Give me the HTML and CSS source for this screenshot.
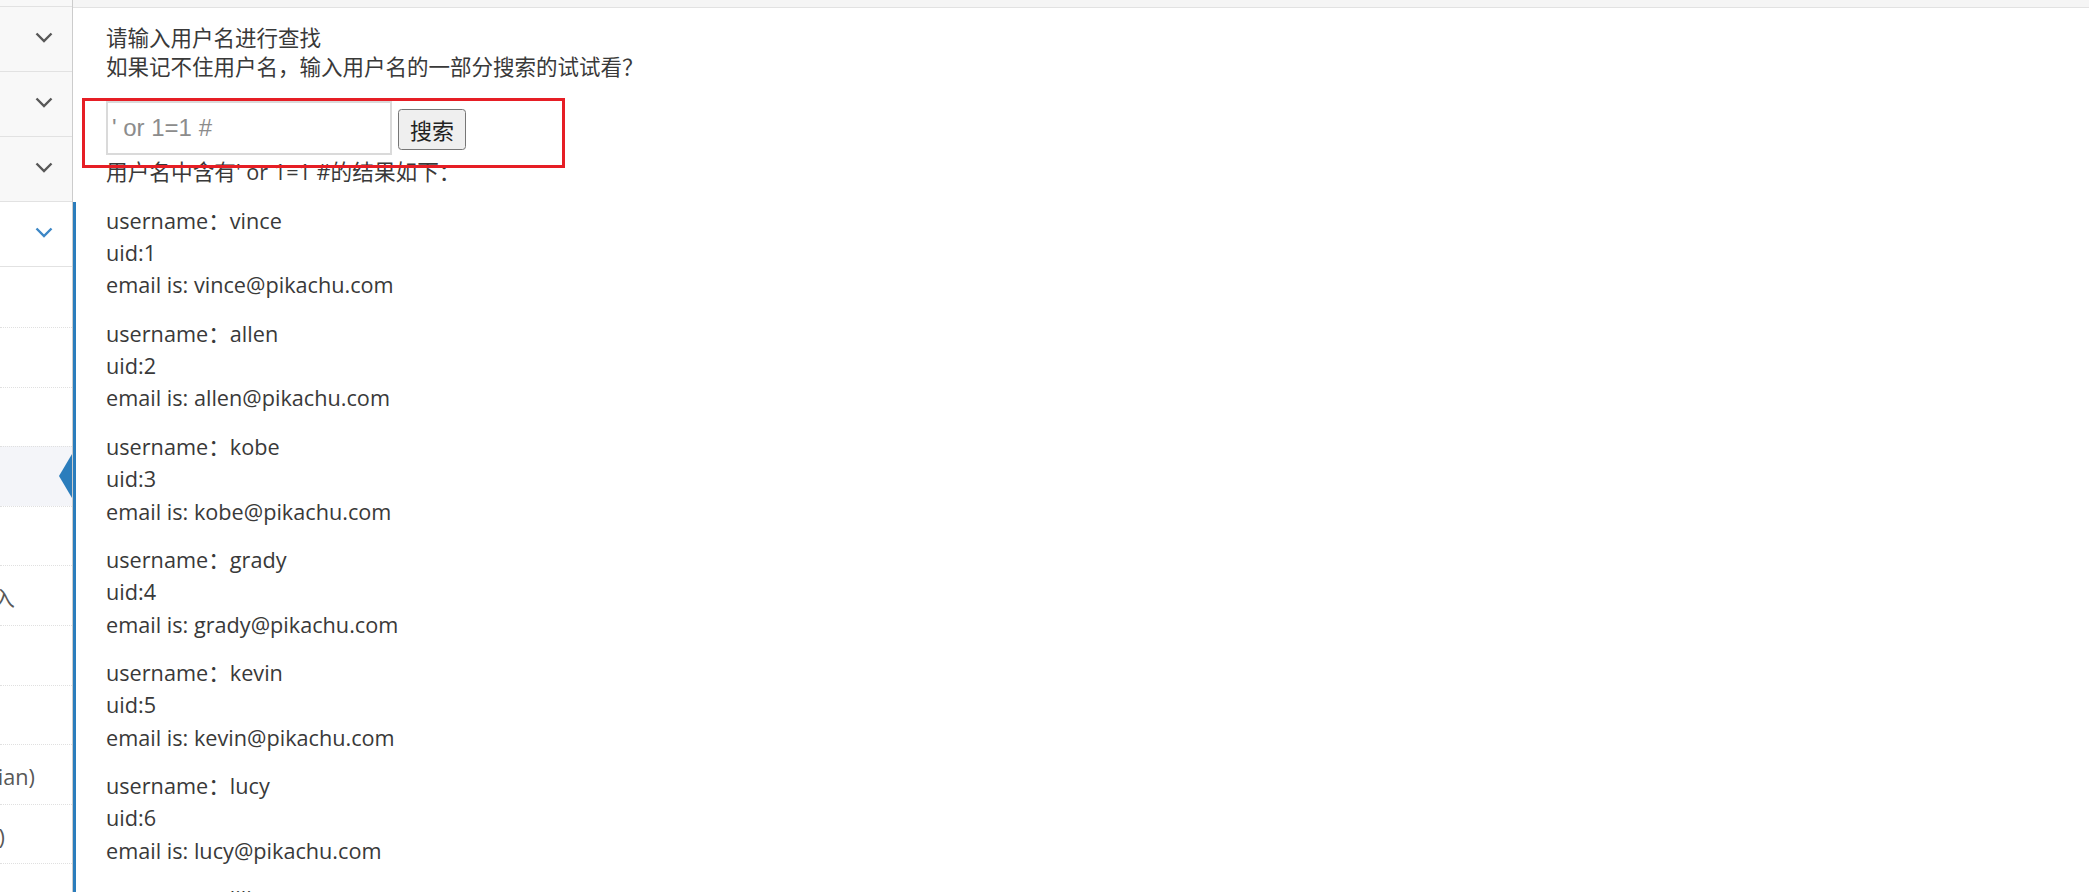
FILE: index.html
```html
<!DOCTYPE html>
<html lang="zh-CN">
<head>
<meta charset="utf-8">
<title>搜索型注入</title>
<link rel="stylesheet" href="styles.css">
</head>
<body>
<div class="layout">
  <aside class="sidebar">
    <ul class="nav-list">
      <li class="nav-item nav-item-cut"></li>
      <li class="nav-item">
        <span class="nav-text">Burte Force</span>
        <svg class="chev" width="18" height="11" viewBox="0 0 18 11"><polyline points="1.5,1.5 9,9 16.5,1.5" fill="none" stroke="currentColor" stroke-width="2.4"/></svg>
      </li>
      <li class="nav-item">
        <span class="nav-text">Cross-Site Scripting</span>
        <svg class="chev" width="18" height="11" viewBox="0 0 18 11"><polyline points="1.5,1.5 9,9 16.5,1.5" fill="none" stroke="currentColor" stroke-width="2.4"/></svg>
      </li>
      <li class="nav-item">
        <span class="nav-text">CSRF</span>
        <svg class="chev" width="18" height="11" viewBox="0 0 18 11"><polyline points="1.5,1.5 9,9 16.5,1.5" fill="none" stroke="currentColor" stroke-width="2.4"/></svg>
      </li>
      <li class="nav-open">
        <div class="nav-item nav-item-open">
          <span class="nav-text">SQL-Inject</span>
          <svg class="chev" width="18" height="11" viewBox="0 0 18 11"><polyline points="1.5,1.5 9,9 16.5,1.5" fill="none" stroke="currentColor" stroke-width="2.4"/></svg>
        </div>
        <ul class="submenu">
          <li class="sub-item sub-first"></li>
          <li class="sub-item"></li>
          <li class="sub-item"></li>
          <li class="sub-item sub-active"></li>
          <li class="sub-item"></li>
          <li class="sub-item sub-end-15"><span class="sub-text">insert/update注入</span></li>
          <li class="sub-item"></li>
          <li class="sub-item"></li>
          <li class="sub-item sub-end-35"><span class="sub-text">盲注(base on boolian)</span></li>
          <li class="sub-item sub-end-5"><span class="sub-text">盲注(base on time)</span></li>
          <li class="sub-item"></li>
        </ul>
      </li>
    </ul>
  </aside>
  <main class="main">
    <div class="breadcrumbs"></div>
    <div class="page-content">
      <p class="para para-intro">请输入用户名进行查找<br>如果记不住用户名，输入用户名的一部分搜索的试试看？</p>
      <form class="search-form">
        <input class="search-input" type="text" placeholder="' or 1=1 #">
        <button class="search-btn" type="button">搜索</button>
      </form>
      <p class="para para-title">用户名中含有' or 1=1 #的结果如下：</p>
      <p class="para">username：vince<br>uid:1<br>email is: vince@pikachu.com</p>
      <p class="para">username：allen<br>uid:2<br>email is: allen@pikachu.com</p>
      <p class="para">username：kobe<br>uid:3<br>email is: kobe@pikachu.com</p>
      <p class="para">username：grady<br>uid:4<br>email is: grady@pikachu.com</p>
      <p class="para">username：kevin<br>uid:5<br>email is: kevin@pikachu.com</p>
      <p class="para">username：lucy<br>uid:6<br>email is: lucy@pikachu.com</p>
      <p class="para">username：lili<br>uid:7<br>email is: lili@pikachu.com</p>
      <div class="highlight-box"></div>
    </div>
  </main>
</div>
</body>
</html>
```

FILE: styles.css
```css
* {
  box-sizing: border-box;
}

html, body {
  margin: 0;
  padding: 0;
  background: #ffffff;
}

body {
  width: 2089px;
  height: 892px;
  overflow: hidden;
  font-family: "Open Sans", "Noto Sans CJK SC", sans-serif;
  font-size: 21.67px;
  color: #393939;
}

.layout {
  display: flex;
  height: 892px;
  overflow: hidden;
}

/* Sidebar */
.sidebar {
  width: 73px;
  flex: 0 0 73px;
  background: #f2f2f2;
  border-right: 1px solid #cccccc;
  position: relative;
  z-index: 2;
}

.nav-list,
.submenu {
  list-style: none;
  margin: 0;
  padding: 0;
}

.nav-item {
  height: 65px;
  border-top: 1px solid #e2e2e2;
  background: #f8f8f8;
  display: flex;
  align-items: center;
  justify-content: flex-end;
  padding-right: 19px;
  padding-bottom: 4px;
  overflow: hidden;
  color: #5a5a5a;
  white-space: nowrap;
}

.nav-item-cut {
  height: 6px;
  border-top: none;
  padding: 0;
}

.nav-text {
  display: none;
}

.chev {
  display: block;
  flex: 0 0 auto;
  color: #585858;
}

.nav-open {
  position: relative;
}

.nav-open::after {
  content: "";
  position: absolute;
  top: 1px;
  bottom: 0;
  right: -4px;
  width: 3px;
  background: #2b7dbc;
}

.nav-item-open {
  background: #ffffff;
}

.nav-item-open .chev {
  color: #3d87c6;
}

.submenu {
  border-top: 1px solid #e2e2e2;
  background: #ffffff;
}

.sub-item {
  height: 59.6px;
  border-top: 1px dotted #e0e0e0;
  display: flex;
  align-items: center;
  justify-content: flex-end;
  overflow: hidden;
  white-space: nowrap;
  color: #585858;
  position: relative;
}

.sub-first {
  border-top: none;
  height: 60px;
}

.sub-end-15 {
  padding-right: 57px;
}

.sub-end-35 {
  padding-right: 37px;
}

.sub-end-5 {
  padding-right: 67px;
}

.sub-text {
  flex: 0 0 auto;
  padding-top: 2px;
}

.sub-active {
  background: #f4f5f9;
  overflow: visible;
}

.sub-active::after {
  content: "";
  position: absolute;
  right: 0;
  top: 50%;
  margin-top: -22.5px;
  border-style: solid;
  border-color: transparent #2b7dbc transparent transparent;
  border-width: 22.5px 13px 22.5px 0;
}

/* Main */
.main {
  flex: 1 1 auto;
  display: flex;
  flex-direction: column;
}

.breadcrumbs {
  height: 8px;
  flex: 0 0 8px;
  background: #f5f5f5;
  border-bottom: 1px solid #e2e2e2;
}

.page-content {
  position: relative;
  padding: 14.5px 20px 0 33px;
}

.para {
  margin: 0 0 16.2px;
  line-height: 32.3px;
}

.para-intro {
  font-size: 21.5px;
  line-height: 29.6px;
  margin-bottom: 19.8px;
}

.para-title {
  margin-bottom: 16px;
}

.search-form {
  display: flex;
  align-items: center;
  gap: 6px;
  height: 55px;
  margin: 0;
}

.search-input {
  width: 286px;
  height: 54px;
  border: 2px solid #dadada;
  padding: 0 4px;
  font-family: "Liberation Sans", Arial, sans-serif;
  font-size: 24px;
  color: #555;
  background: #fff;
  outline: none;
  align-self: flex-start;
}

.search-input::placeholder {
  color: #8c8c8c;
}

.search-btn {
  width: 68px;
  height: 41px;
  border: 1.5px solid #767676;
  border-radius: 3.5px;
  background: #efefef;
  font-family: "Noto Sans CJK SC", sans-serif;
  font-size: 22px;
  color: #222;
  padding: 0;
  margin-top: 1px;
}

.highlight-box {
  position: absolute;
  left: 9px;
  top: 90px;
  width: 483px;
  height: 70px;
  border: 3px solid #e61e25;
  pointer-events: none;
}
```
